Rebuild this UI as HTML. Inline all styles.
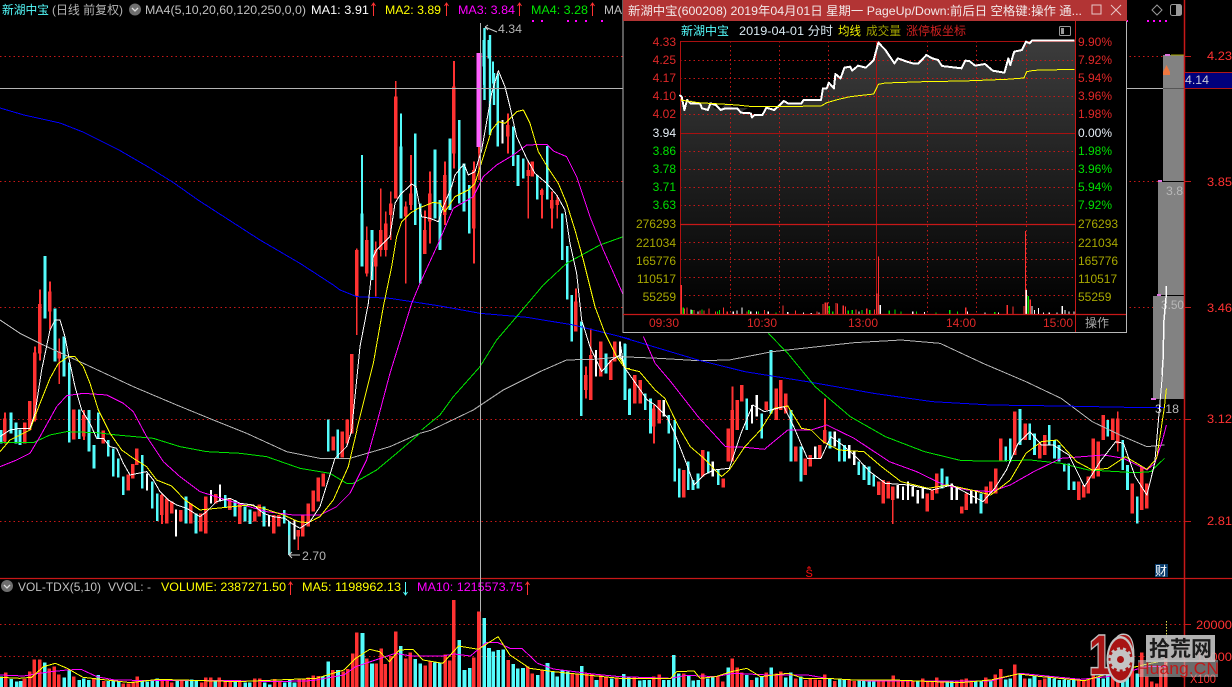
<!DOCTYPE html>
<html lang="zh-CN"><head><meta charset="utf-8"><title>新湖中宝</title>
<style>
html,body{margin:0;padding:0;background:#000;width:1232px;height:687px;overflow:hidden}
svg{display:block;position:absolute;left:0;top:0}
text{font-family:"Liberation Sans","Noto Sans CJK SC",sans-serif;font-size:12px}
.l{fill:none;stroke-width:1;vector-effect:non-scaling-stroke;stroke-linejoin:round;shape-rendering:crispEdges}
.w{stroke:#fff}.y{stroke:#ff0}.m{stroke:#ff00ff}.g{stroke:#00e600}.a{stroke:#b4b4b4}.b{stroke:#0000ff}
.d{stroke:#c81818;stroke-width:1;stroke-dasharray:1.5 3;fill:none}
.cr{stroke:#54fcfc;fill:none}.rr{stroke:#ff3232;fill:none}.wh{stroke:#fff;fill:none}
</style></head><body>
<svg width="1232" height="687" viewBox="0 0 1232 687" xmlns="http://www.w3.org/2000/svg">
<defs>
<clipPath id="cg"><rect x="1153" y="55" width="31" height="344"/></clipPath>
<linearGradient id="g1" gradientUnits="userSpaceOnUse" x1="0" y1="41" x2="0" y2="224"><stop offset="0" stop-color="#3c3c3c"/><stop offset="1" stop-color="#141414"/></linearGradient>
<linearGradient id="g2" x1="0" y1="0" x2="0" y2="1"><stop offset="0" stop-color="#141414"/><stop offset="1" stop-color="#000"/></linearGradient>
</defs>
<rect width="1232" height="687" fill="#000"/>
<!-- grid -->
<path class="d" d="M0 56.5H1184M0 181.5H1184M0 307.5H1184M0 419.5H1184M0 521.5H1184M0 624.5H1184M0 656.5H1184"/>
<path d="M1127 21h1M1147 21h2M1153 21h2M1159 21h2M1165 21h2M532 21h2M541 21h2M567 21h2M575 21h2M585 21h2M601 21h2" stroke="#ff00ff" stroke-width="2" fill="none"/>
<!-- gray histogram -->
<path d="M1163 55H1184V399H1153V296H1158V182H1163Z" fill="#828282"/>
<path d="M1158 181.5H1184M1153 295.5H1184" stroke="#000" stroke-width="1"/>
<path d="M1165 55h5M1158 181h4M1157 295h4M1151 399h5" stroke="#e070e0" stroke-width="2"/>
<path d="M1171 55h13" stroke="#a8a800" stroke-width="1"/>
<path d="M1163 72h7l-3.5-7-3.500 7z M1163 72v3h7v-3z" fill="#f07840"/>
<g clip-path="url(#cg)"><text x="1166" y="195" fill="#b8b8b8" textLength="24" lengthAdjust="spacingAndGlyphs">3.85</text></g>
<text x="1161" y="309" fill="#b8b8b8" textLength="23" lengthAdjust="spacingAndGlyphs">3.50</text>
<text x="1155" y="413" fill="#b8b8b8" textLength="24" lengthAdjust="spacingAndGlyphs">3.18</text>

<!-- candles A -->
<g transform="translate(0 240) scale(.3333)" shape-rendering="crispEdges">
<path class="rr" stroke-width="10.5" d="M15 535V605M75 548V610M90 483V570M105 338V540M120 192V340M150 155V215M178 335V355M222 508V598M252 525V590M310 572V610M385 703V752M398 672V715M410 625V675M486 765V825M500 775V850M515 785V820M543 810V845M573 790V850M603 820V875M618 770V880M648 762V790M690 775V810M720 790V852M765 815V845M778 793V830M822 825V880M837 825V860M895 870V890M908 825V890M925 790V860M940 752V815M955 712V785M970 700V740M1000 590V632M1027 575V652M1042 538V610M1056 342V580"/>
<path class="rr" stroke-width="5" d="M15 517V610M105 320V545M120 148V362M150 125V268M178 295V432M252 510V600M486 762V852M895 870V930"/>
<path class="wh" stroke-width="6" d="M441 700V752M528 808V890M633 750V790M660 733V785M807 825V860M883 840V898"/>
<path class="cr" stroke-width="8" d="M3 570V610M33 517V580M48 548V610M60 568V615M135 48V235M165 205V365M192 290V410M208 368V608M238 508V597M267 510V635M282 615V685M295 517V595M325 600V650M340 625V710M355 655V712M370 710V765M427 645V745M457 725V805M472 760V843M558 770V850M588 820V880M676 765V802M705 780V830M735 800V845M750 808V852M792 800V860M853 810V850M868 845V945M985 538V635M1013 568V655"/>
</g>
<!-- candles B -->
<g transform="translate(340 40) scale(.3333)" shape-rendering="crispEdges">
<path class="rr" stroke-width="5" d="M50 625V885M80 560V710M107 605V770M122 445V650M137 515V650M152 455V600M167 123V475M197 485V730M213 345V510M255 512V642M270 395V610M315 365V555M342 63V385M402 365V670M417 250V340M504 220V340M565 365V535M606 445V535M636 455V565M652 465V535M708 745V875M738 980V1075M752 865V1080M783 905V1010"/>
<path class="rr" stroke-width="10.5" d="M50 630V770M80 600V700M107 630V680M122 570V630M137 550V630M152 490V525M167 170V475M197 500V530M213 460V495M255 570V642M270 460V545M315 405V525M342 140V340M402 390V565M504 255V290M565 390V408M577 365V410M606 450V465M636 480V505M652 480V495M708 785V875M738 1005V1050M752 945V1080M783 905V1010M812 960V1020M825 905V965"/>
<path class="cr" stroke-width="5" d="M66 345V520M183 220V320M432 0V135M459 65V130"/>
<path class="cr" stroke-width="8" d="M66 520V680M96 570V720M183 320V535M226 280V555M241 490V730M285 328V535M300 480V630M330 295V510M358 240V490M372 370V515M388 435V580M432 0V80M447 0V55M473 100V320M520 260V378M534 345V438M550 355V415M592 405V478M622 318V478M667 520V660M682 618V778M695 765V905M724 845V1128M798 940V1000M856 912V1080M868 1048V1125"/>
<path class="wh" stroke-width="6" d="M488 240V310M768 930V1010M840 905V955"/>
</g>
<rect x="476.500" y="53" width="5" height="94" fill="#ff60ff"/>
<path d="M479 147V180" stroke="#ff3232" stroke-width="1.500"/>
<path d="M484.500 28V100M490 35V93M490 93V135M494 73V105" stroke="#54fcfc" stroke-width="2.400"/>
<!-- candles C -->
<g transform="translate(620 330) scale(.3903 .3333)" shape-rendering="crispEdges">
<path class="rr" stroke-width="4.500" d="M87 225V340M288 170V395M525 205V340M699 470V582M1275 245V365"/>
<path class="rr" stroke-width="9" d="M38 135V220M52 150V220M87 235V290M100 210V280M163 420V503M212 360V440M264 445V473M277 295V395M288 240V395M300 210V300M312 165V215M375 215V240M400 175V270M412 150V240M425 190V250M450 350V395M475 385V435M488 375V410M512 345V385M525 300V340M663 455V495M675 450V520M687 455V505M699 470V510M787 490V545M800 480V510M812 430V490M875 530V550M887 490V540M938 470V520M950 455V490M963 415V490M975 325V395M1012 245V375M1038 280V330M1075 340V385M1088 315V375M1176 455V510M1188 465V503M1200 440V490M1212 325V445M1225 335V440M1238 255V330M1263 265V330M1275 265V340M1312 460V550M1337 410V540M1350 460V535"/>
<path class="cr" stroke-width="7" d="M12 40V210M25 175V255M65 190V240M78 205V310M125 255V310M140 270V455M152 415V503M175 395V480M187 450V480M200 430V475M226 365V430M252 420V465M325 205V300M363 250V325M387 60V250M438 240V395M464 350V455M538 305V355M562 325V395M575 345V395M612 395V435M625 405V450M638 410V465M650 435V470M825 415V475M838 440V470M925 490V550M988 350V395M1000 325V395M1025 237V345M1050 280V330M1062 310V375M1100 285V345M1113 330V385M1125 345V395M1138 400V425M1150 400V480M1163 455V480M1250 270V320M1288 330V420M1300 405V480M1325 500V580"/>
<path class="wh" stroke-width="6" d="M112 210V260M238 395V440M338 225V280M350 195V260M500 350V385M550 305V350M587 345V385M600 365V405M712 465V505M725 470V510M738 455V510M750 470V500M763 480V520M776 470V505M850 460V510M863 470V510M900 480V520M912 480V520"/>
</g>
<!-- MA lines zoom4 -->
<g transform="translate(0 240) scale(.3333)">
<polyline class="l a" points="0,240 60,280 130,315 250,370 400,440 530,495 640,540 740,580 860,635 960,655 1050,655 1170,620 1260,580 1296,570"/>
<polyline class="l g" points="0,607 100,608 150,585 200,575 290,578 350,585 460,595 540,620 620,635 720,640 800,650 900,685 990,700 1040,730 1060,730 1130,690 1190,640 1260,580"/>
<polyline class="l m" points="0,680 50,660 90,640 120,590 170,500 200,467 250,460 320,465 370,490 400,515 440,590 490,665 540,710 600,755 680,780 730,795 800,815 880,825 960,825 1010,800 1050,760 1100,660 1125,570"/>
<polyline class="l y" points="0,635 30,600 60,585 90,570 120,490 150,415 175,370 205,350 225,350 250,380 270,430 295,510 330,580 365,630 400,655 440,680 470,720 515,738 555,780 600,810 650,805 700,800 750,795 790,805 850,825 895,845 925,848 960,830 1000,780 1045,680 1071,570"/>
<polyline class="l w" points="0,590 30,570 60,565 90,565 105,520 125,390 150,270 165,240 180,240 195,290 210,370 225,440 245,510 270,550 290,595 310,595 330,620 350,625 370,670 390,705 415,700 440,695 460,720 480,755 505,780 530,795 560,805 600,830 620,815 650,785 690,775 720,790 760,795 790,820 820,830 855,835 875,850 900,865 930,845 960,800 985,720 1005,655 1040,620 1056,570"/>
<polyline class="l b" points="780,0 900,70 1000,135 1020,150"/>
</g>
<polyline class="l b" points="0,108 24,115 60,123 83,132 119,150 150,168 174,183 198,200 260,240"/>
<!-- MA lines zoom5 -->
<g transform="translate(340 40) scale(.3333)">
<polyline class="l b" points="0,750 50,770 150,775 300,798 420,820 560,832 700,855 870,897"/>
<polyline class="l a" points="275,1170 400,1110 490,1050 600,995 680,960 760,958 850,950"/>
<polyline class="l g" points="245,1170 300,1125 340,1070 420,980 470,900 530,830 610,735 680,670 780,615 850,590"/>
<polyline class="l m" points="105,1170 150,1000 215,790 240,730 295,610 340,505 400,470 430,410 470,375 520,345 560,315 620,313 640,333 680,350 710,410 750,530 790,630 850,765"/>
<polyline class="l y" points="50,1170 100,970 130,800 155,680 170,590 185,545 210,520 235,505 280,487 300,490 315,515 345,470 385,450 405,430 430,350 455,270 475,245 495,250 530,215 550,210 570,250 595,335 625,385 655,430 680,490 705,570 730,660 765,800 795,880 830,950 855,985 870,985"/>
<polyline class="l w" points="35,1170 60,920 85,790 100,650 110,630 150,590 165,490 180,465 215,432 228,440 245,530 270,535 295,545 310,500 335,440 345,405 372,372 385,405 405,395 425,330 455,160 475,92 495,140 510,200 530,290 560,355 585,400 620,430 650,465 675,510 690,610 710,700 725,840 750,920 785,995 815,960 840,945 855,980"/>
</g>
<!-- MA lines zoom6 -->
<g transform="translate(620 330) scale(.3903 .3333)">
<polyline class="l a" points="0,80 100,85 200,92 280,90 390,65 600,38 720,30 820,40 930,100 1040,155 1130,205 1210,275 1290,320 1350,350 1395,345"/>
<polyline class="l b" points="0,20 100,55 200,90 320,125 480,155 650,190 800,215 950,225 1130,228 1300,232 1395,232"/>
<polyline class="l g" points="380,10 430,70 500,170 590,260 680,320 780,365 875,392 970,393 1050,390 1130,400 1200,420 1320,428 1360,425 1395,385"/>
<polyline class="l m" points="60,20 90,100 130,155 200,260 270,350 320,352 370,358 430,300 490,300 530,285 600,325 690,395 760,425 830,465 890,480 950,485 1000,465 1060,425 1130,385 1240,375 1290,385 1350,420 1370,400 1390,330 1400,285"/>
<polyline class="l y" points="0,85 15,115 50,125 90,180 115,205 150,290 180,350 215,385 260,440 280,420 320,350 360,300 395,235 430,228 465,295 490,300 520,335 560,360 625,365 670,410 720,455 790,475 840,465 900,480 950,495 1000,450 1040,370 1080,335 1120,330 1170,395 1210,420 1250,415 1295,380 1350,418 1375,385 1395,230 1400,175"/>
<polyline class="l w" points="0,35 10,110 40,160 70,210 90,225 120,260 140,310 170,400 190,465 215,435 240,420 280,415 310,310 340,225 370,245 420,230 445,290 480,385 515,385 540,320 570,345 600,375 640,425 680,460 740,465 800,480 850,465 890,490 930,515 960,475 990,420 1020,340 1050,305 1080,345 1110,345 1150,375 1190,470 1230,395 1270,335 1290,340 1320,440 1350,495 1370,400 1390,130"/>
</g>
<polyline class="l w" style="stroke-width:1.500" points="1162,375 1163,360 1164,320 1166,298 1166.500,286"/>
<!-- crosshair -->
<path d="M0 88.500H1184" stroke="#b4b4b4" stroke-width="1"/>
<path d="M1163 88.500H1184" stroke="#555" stroke-width="1"/>
<path d="M480.500 23V687" stroke="#b4b4b4" stroke-width="1"/>
<!-- annotations -->
<path d="M485 27l12 5M485 27l3-2M485 27l3 3M289 555h11M289 555l3-3M289 555l3 3M289 535v20" stroke="#ccc" fill="none" stroke-width="1"/>
<text x="498" y="33" fill="#b4b4b4" textLength="24" lengthAdjust="spacingAndGlyphs">4.34</text>
<text x="302" y="560" fill="#b4b4b4" textLength="24" lengthAdjust="spacingAndGlyphs">2.70</text>
<!-- top bar -->
<text x="2" y="14" fill="#54fcfc" textLength="47" lengthAdjust="spacingAndGlyphs">新湖中宝</text>
<text x="52" y="14" fill="#b4b4b4" textLength="71" lengthAdjust="spacingAndGlyphs">(日线 前复权)</text>
<circle cx="135" cy="9.500" r="6" fill="#6e6e6e"/><path d="M132 8l3 3 3-3" stroke="#ddd" stroke-width="1.300" fill="none"/>
<text x="145" y="14" fill="#c0c0c0" textLength="161" lengthAdjust="spacingAndGlyphs">MA4(5,10,20,60,120,250,0,0)</text>
<text x="311" y="14" fill="#fff" textLength="58" lengthAdjust="spacingAndGlyphs">MA1: 3.91</text>
<text x="385" y="14" fill="#ff0" textLength="56" lengthAdjust="spacingAndGlyphs">MA2: 3.89</text>
<text x="458" y="14" fill="#ff00ff" textLength="57" lengthAdjust="spacingAndGlyphs">MA3: 3.84</text>
<text x="531" y="14" fill="#00e600" textLength="57" lengthAdjust="spacingAndGlyphs">MA4: 3.28</text>
<text x="604" y="14" fill="#c0c0c0">MA</text>
<path d="M373.500 3v13M371.500 6l2-3 2 3M446.500 3v13M444.500 6l2-3 2 3M519.500 3v13M517.500 6l2-3 2 3M592.500 3v13M590.500 6l2-3 2 3" stroke="#ff3232" fill="none"/>
<!-- axis -->
<path d="M1184.500 0V687" stroke="#c81818" stroke-width="1.500"/>
<path d="M0 578.500H1232" stroke="#c81818" stroke-width="1.200"/>
<path d="M1185 56.500h6M1185 181.500h6M1185 307.500h6M1185 419.500h6M1185 521.500h6M1185 624.500h6M1185 656.500h6" stroke="#c81818"/>
<g fill="#ff3232">
<text x="1207" y="60" textLength="25" lengthAdjust="spacingAndGlyphs">4.23</text>
<text x="1207" y="186" textLength="25" lengthAdjust="spacingAndGlyphs">3.85</text>
<text x="1207" y="312" textLength="25" lengthAdjust="spacingAndGlyphs">3.46</text>
<text x="1207" y="423" textLength="25" lengthAdjust="spacingAndGlyphs">3.12</text>
<text x="1207" y="525" textLength="25" lengthAdjust="spacingAndGlyphs">2.81</text>
<text x="1196" y="629" textLength="36" lengthAdjust="spacingAndGlyphs">20000</text>
<text x="1196" y="661" textLength="36" lengthAdjust="spacingAndGlyphs">10000</text>
<text x="1190" y="683" textLength="26" lengthAdjust="spacingAndGlyphs">X100</text>
</g>
<rect x="1185" y="72" width="47" height="16" fill="#00007c"/>
<path d="M1185 72.500H1232M1185 88.500H1232" stroke="#b01818"/>
<text x="1185" y="84" fill="#c8c8d8" textLength="24" lengthAdjust="spacingAndGlyphs">4.14</text>
<!-- top right icons -->
<path d="M1157 5l5 5-5 5-5-5z" fill="none" stroke="#999"/>
<rect x="1170.500" y="4.500" width="11" height="11" rx="2" fill="none" stroke="#999"/><rect x="1176" y="5" width="5" height="10" fill="#999"/>
<!-- markers -->
<text x="805.500" y="577" fill="#ff1010" style="font-size:11px">S</text>
<path d="M807 568h4M809 566v2" stroke="#ff1010"/>
<rect x="1155" y="564" width="13" height="13" fill="#0a3e6e"/>
<text x="1155" y="575" fill="#fff">财</text>
<!-- volume row -->
<circle cx="7" cy="586" r="6" fill="#6e6e6e"/><path d="M4 585l3 3 3-3" stroke="#ddd" stroke-width="1.300" fill="none"/>
<text x="18" y="591" fill="#c0c0c0" textLength="83" lengthAdjust="spacingAndGlyphs">VOL-TDX(5,10)</text>
<text x="108" y="591" fill="#c0c0c0" textLength="43" lengthAdjust="spacingAndGlyphs">VVOL: -</text>
<text x="161" y="591" fill="#ff0" textLength="125" lengthAdjust="spacingAndGlyphs">VOLUME: 2387271.50</text>
<text x="302" y="591" fill="#ff0" textLength="99" lengthAdjust="spacingAndGlyphs">MA5: 1198962.13</text>
<text x="417" y="591" fill="#ff00ff" textLength="106" lengthAdjust="spacingAndGlyphs">MA10: 1215573.75</text>
<path d="M290.500 582v13M288.500 585l2-3 2 3M527.500 582v13M525.500 585l2-3 2 3" stroke="#ff3232" fill="none"/>
<path d="M405.500 582v13M403.500 592l2 3 2-3" stroke="#54fcfc" fill="none"/>
<!-- volume bars left -->
<g transform="translate(0 570) scale(.3953 .3333)" shape-rendering="crispEdges">
<path class="cr" stroke-width="9" d="M3 320V351M28 327V351M42 335V351M52 333V351M113 277V351M162 322V351M175 300V351M200 330V351M212 325V351M225 330V351M249 315V351M274 333V351M287 333V351M300 335V351M360 333V351M372 335V351M385 328V351M398 325V351M448 332V351M472 328V351M485 328V351M497 330V351M545 333V351M595 333V351M620 338V351M632 338V351M670 338V351M682 343V351M720 338V351M733 330V351M745 338V351M817 320V351M830 275V351M855 300V351M917 189V351M941 281V351M1014 228V351M1051 267V351M1063 280V351M1100 278V351M1113 278V351M1162 210V351M1175 300V351M1188 294V351M1225 144V351M1237 234V351M1248 245V351M1260 240V351M1273 238V351M1298 282V351M1310 296V351M1323 294V351M1360 315V351M1385 279V351M1398 305V351M1410 320V351M1423 300V351M1436 305V351M1472 288V351M1509 330V351M1547 325V351"/>
<path class="rr" stroke-width="9" d="M15 308V351M62 327V351M75 305V351M87 268V351M100 268V351M125 295V351M137 290V351M149 313V351M187 320V351M237 325V351M262 333V351M312 340V351M325 340V351M337 335V351M347 320V351M410 330V351M423 333V351M435 337V351M460 333V351M510 337V351M520 323V351M533 323V351M555 323V351M570 335V351M582 333V351M607 335V351M645 325V351M657 325V351M695 327V351M708 333V351M757 327V351M768 325V351M780 322V351M792 317V351M805 318V351M842 300V351M868 305V351M880 297V351M892 250V351M903 187V351M928 265V351M952 280V351M964 235V351M975 282V351M988 258V351M1001 184V351M1026 265V351M1038 247V351M1076 287V351M1088 275V351M1126 253V351M1138 272V351M1148 90V351M1199 262V351M1211 124V351M1286 270V351M1335 290V351M1347 310V351M1372 302V351M1448 312V351M1460 310V351M1484 310V351M1497 312V351M1520 315V351M1533 322V351M1560 325V351"/>
<polyline class="l m" points="0,315 60,318 100,310 130,305 170,300 205,298 245,320 290,330 400,332 600,332 700,335 790,332 870,315 900,290 950,270 1000,250 1040,258 1120,258 1150,252 1190,258 1230,218 1260,218 1290,235 1320,235 1360,280 1400,297 1440,303 1500,312 1568,320"/>
<polyline class="l y" points="0,322 50,325 80,322 110,290 140,280 170,295 210,322 330,338 400,328 600,335 800,325 870,300 900,265 935,238 960,245 985,275 1010,240 1045,238 1070,270 1120,280 1160,228 1210,238 1260,200 1290,255 1340,295 1400,305 1568,325"/>
</g>
<path d="M480.500 570V610" stroke="#b4b4b4"/>
<!-- volume bars right -->
<g transform="translate(620 570) scale(.3903 .3333)" shape-rendering="crispEdges">
<path class="cr" stroke-width="9" d="M10 312V351M22 322V351M50 332V351M62 330V351M75 330V351M112 330V351M125 330V351M138 255V351M150 310V351M176 318V351M188 332V351M200 330V351M225 325V351M238 318V351M277 292V351M325 315V351M350 323V351M363 320V351M387 292V351M425 323V351M438 307V351M463 320V351M537 325V351M563 328V351M575 330V351M613 332V351M625 328V351M638 333V351M650 335V351M763 333V351M838 335V351M850 335V351M912 335V351M925 333V351M950 333V351M988 328V351M1000 325V351M1025 310V351M1050 325V351M1062 318V351M1100 320V351M1113 325V351M1125 330V351M1138 328V351M1150 330V351M1163 330V351M1225 320V351M1238 325V351M1250 315V351M1288 318V351M1300 315V351M1325 310V351"/>
<path class="rr" stroke-width="9" d="M37 320V351M87 320V351M100 313V351M163 310V351M212 310V351M250 320V351M263 335V351M287 265V351M300 292V351M312 308V351M338 330V351M375 308V351M400 310V351M412 305V351M450 325V351M476 330V351M487 325V351M500 328V351M512 330V351M525 313V351M550 333V351M587 328V351M600 333V351M663 332V351M675 328V351M688 332V351M700 317V351M713 333V351M725 333V351M737 333V351M750 333V351M776 325V351M788 333V351M800 335V351M812 322V351M825 333V351M863 333V351M875 328V351M887 325V351M900 333V351M937 322V351M962 313V351M975 297V351M1012 283V351M1037 325V351M1076 330V351M1088 325V351M1176 330V351M1188 333V351M1200 330V351M1212 302V351M1263 320V351M1275 313V351M1312 285V351M1337 247V351M1350 320V351M1362 335V351M1375 340V351M1385 290V351M1398 250V351"/>
<polyline class="l m" points="0,320 130,325 170,316 245,320 290,310 380,315 480,315 530,325 640,333 850,333 950,333 1025,310 1180,328 1250,320 1350,290 1400,290"/>
<polyline class="l y" points="0,325 130,325 145,305 190,303 205,325 245,320 285,305 325,295 360,320 430,310 470,325 530,325 600,330 700,330 870,338 950,330 1020,312 1080,320 1190,332 1270,305 1340,285 1400,270"/>
</g>
<path d="M1166.500 621V670" stroke="#dede50" stroke-dasharray="1.500 1.500"/>
<!-- watermark -->
<rect x="1146" y="635" width="69" height="27" fill="#c4c4c4" opacity=".9"/>
<rect x="1138" y="660" width="80" height="17" fill="#c4c4c4" opacity=".55"/>
<text x="1149" y="656" fill="#1c1c1c" style="font-size:21px;font-weight:bold" textLength="63" lengthAdjust="spacingAndGlyphs">拾荒网</text>
<text x="1137" y="674" fill="#c01818" style="font-size:17px" textLength="82" lengthAdjust="spacingAndGlyphs">Huang.CN</text>
<text x="1089" y="674" fill="#a81414" stroke="#c4c4c4" stroke-width="3" paint-order="stroke" style="font-size:56px;font-weight:bold" textLength="46" lengthAdjust="spacingAndGlyphs">10</text>
<ellipse cx="1120.500" cy="659.500" rx="14" ry="23.500" fill="#c4c4c4"/>
<ellipse cx="1120.500" cy="659.500" rx="12" ry="21" fill="#a81414"/>
<circle cx="1120.500" cy="659.500" r="10" fill="#c4c4c4"/>
<circle cx="1120.500" cy="659.500" r="11" fill="none" stroke="#c4c4c4" stroke-width="2.500" stroke-dasharray="3 3"/>
<circle cx="1120.500" cy="659.500" r="3.500" fill="#a81414"/>
<!-- popup -->
<rect x="623" y="0" width="503.500" height="332.500" fill="#000" stroke="#b8b8b8" stroke-width="1"/>
<rect x="623" y="0" width="504" height="21" fill="#b23434"/>
<text x="628" y="15" fill="#f2e8e8" textLength="454" lengthAdjust="spacingAndGlyphs">新湖中宝(600208) 2019年04月01日 星期一 PageUp/Down:前后日 空格键:操作 通...</text>
<rect x="1092" y="5" width="9" height="9" fill="none" stroke="#e8c8c8"/>
<path d="M1111 5l10 10M1121 5l-10 10" stroke="#e8c8c8" fill="none"/>
<text x="681" y="35" fill="#54fcfc" textLength="48" lengthAdjust="spacingAndGlyphs">新湖中宝</text>
<text x="739" y="35" fill="#d8e8f0" textLength="94" lengthAdjust="spacingAndGlyphs">2019-04-01 分时</text>
<text x="838" y="35" fill="#f0f000" textLength="23" lengthAdjust="spacingAndGlyphs">均线</text>
<text x="866" y="35" fill="#a0a000" textLength="35" lengthAdjust="spacingAndGlyphs">成交量</text>
<text x="906" y="35" fill="#d02020" textLength="60" lengthAdjust="spacingAndGlyphs">涨停板坐标</text>
<rect x="1059.500" y="26.500" width="11" height="9" rx="1" fill="none" stroke="#999"/><rect x="1061" y="28" width="3" height="6" fill="#999"/>
<path fill="url(#g1)" d="M680 95 L684 110 L690 100 L700 103 L712 103 L714 108 L720 110 L726 103 L730 105 L735 110 L740 108 L748 108 L741 112 L751 113 L752 117 L755 115 L763 115 L766 108 L774 110 L778 107 L784 101 L788 103 L801 103 L803 100 L821 100 L823 88 L827 88 L829 83 L834 88 L835 74 L841 78 L844 68 L850 67 L852 71 L858 66 L866 68 L874 60 L878 43 L885 50 L894 63 L898 58 L907 62 L913 63 L919 63 L926 55 L932 58 L938 60 L942 66 L962 68 L966 61 L969 61 L975 66 L985 64 L993 71 L1004 73 L1008 58 L1010 65 L1014 52 L1022 50 L1026 42 L1030 43 L1032 41 L1075 41 L1075 224 L680 224Z"/>
<rect x="680" y="224" width="395" height="90" fill="url(#g2)"/>
<path class="d" d="M680 41.500H1075M680 60.500H1075M680 78.500H1075M680 96.500H1075M680 114.500H1075M680 151.500H1075M680 169.500H1075M680 187.500H1075M680 205.500H1075M680 242.500H1075M680 259.500H1075M680 277.500H1075M680 295.500H1075M730.500 41V314M779.500 41V314M828.500 41V314M927.500 41V314M976.500 41V314M1026.500 41V314"/>
<path d="M680 41.500H1075M680 133.500H1075" stroke="#a81010" stroke-width="1"/>
<path d="M680.500 41V314M876.500 41V314" stroke="#b01010" stroke-width="1"/>
<path d="M1075.500 21V332" stroke="#c81818" stroke-width="1"/>
<path d="M680 224.500H1075" stroke="#c81818" stroke-width="1.200"/>
<!-- popup vol -->
<g transform="translate(620 170) scale(.3903 .3333)" shape-rendering="crispEdges">
<path class="rr" stroke-width="3" d="M157 345V432M165 415V432M172 412V432M190 420V432M205 422V432M215 422V432M228 416V432M245 424V432M265 412V432M275 425V432M325 425V432M370 420V432M418 407V432M450 422V432M505 425V432M520 402V432M526 397V432M531 397V432M553 399V432M557 400V432M572 407V432M578 410V432M605 418V432M632 415V432M652 418V432M658 370V432M662 260V432M886 412V432M992 405V432M1007 410V432M1035 408V432M1039 183V432M1051 388V432"/>
<path d="M162 412V432M185 420V432M210 418V432M250 424V432M255 420V432M330 420V432M355 425V432M400 428V432M536 408V432M545 425V432M585 422V432M595 420V432M620 420V432M640 420V432M690 422V432M705 418V432M720 425V432M760 425V432M810 428V432M845 420V432M865 425V432M960 426V432M1046 378V432" stroke="#00e000" stroke-width="3" fill="none"/>
<path class="wh" stroke-width="3" d="M182 418V432M200 424V432M290 424V432M300 422V432M313 412V432M335 425V432M350 425V432M380 424V432M430 426V432M470 428V432M490 429V432M510 427V432M612 425V432M667 405V432M750 425V432M780 426V432M890 425V432M935 428V432M970 427V432M1041 360V432M1056 408V432M1062 420V432M1072 414V432M1085 428V432M1100 428V432M1120 428V432M1133 408V432M1140 420V432M1150 425V432M1163 424V432"/>
</g>
<!-- popup price -->
<g transform="translate(620 0) scale(.3903 .3333)">
<polyline class="l w" style="stroke-width:2" points="152,285 158,290 165,330 172,300 180,310 205,310 210,325 225,330 232,310 245,315 258,330 270,325 300,325 310,338 335,340 338,352 345,345 365,345 375,323 395,330 405,320 420,303 430,310 465,310 470,300 515,300 520,265 530,265 535,248 548,265 552,222 565,235 575,203 590,200 595,212 610,197 630,203 650,180 662,128 680,150 703,190 712,175 735,185 750,190 765,190 785,165 800,175 815,180 825,198 875,205 885,182 895,183 910,197 935,192 955,212 985,218 995,175 1000,195 1010,155 1030,150 1040,125 1050,130 1055,122 1165,122"/>
<polyline class="l y" points="155,300 200,308 300,315 340,320 400,320 515,318 530,308 560,298 590,290 650,282 662,253 680,249 780,245 880,243 990,238 1035,234 1042,215 1060,211 1130,209 1165,208"/>
</g>
<path d="M623 314.500H1126" stroke="#c81818" stroke-width="1.200"/>
<!-- popup labels -->
<g text-anchor="end">
<g fill="#e02828"><text x="676" y="46">4.33</text><text x="676" y="64">4.25</text><text x="676" y="82">4.17</text><text x="676" y="100">4.10</text><text x="676" y="118">4.02</text></g>
<text x="676" y="137" fill="#e8f0f8">3.94</text>
<g fill="#00e000"><text x="676" y="155">3.86</text><text x="676" y="173">3.78</text><text x="676" y="191">3.71</text><text x="676" y="209">3.63</text></g>
<g fill="#a8a800"><text x="676" y="228">276293</text><text x="676" y="247">221034</text><text x="676" y="265">165776</text><text x="676" y="283">110517</text><text x="676" y="301">55259</text></g>
</g>
<g fill="#e02828"><text x="1078" y="46">9.90%</text><text x="1078" y="64">7.92%</text><text x="1078" y="82">5.94%</text><text x="1078" y="100">3.96%</text><text x="1078" y="118">1.98%</text></g>
<text x="1078" y="137" fill="#e8f0f8">0.00%</text>
<g fill="#00e000"><text x="1078" y="155">1.98%</text><text x="1078" y="173">3.96%</text><text x="1078" y="191">5.94%</text><text x="1078" y="209">7.92%</text></g>
<g fill="#a8a800"><text x="1078" y="228">276293</text><text x="1078" y="247">221034</text><text x="1078" y="265">165776</text><text x="1078" y="283">110517</text><text x="1078" y="301">55259</text></g>
<g fill="#e02828" text-anchor="middle"><text x="664" y="327">09:30</text><text x="762" y="327">10:30</text><text x="863" y="327">13:00</text><text x="961" y="327">14:00</text><text x="1058" y="327">15:00</text></g>
<text x="1085" y="327" fill="#a8a8a8">操作</text>
</svg>
</body></html>
